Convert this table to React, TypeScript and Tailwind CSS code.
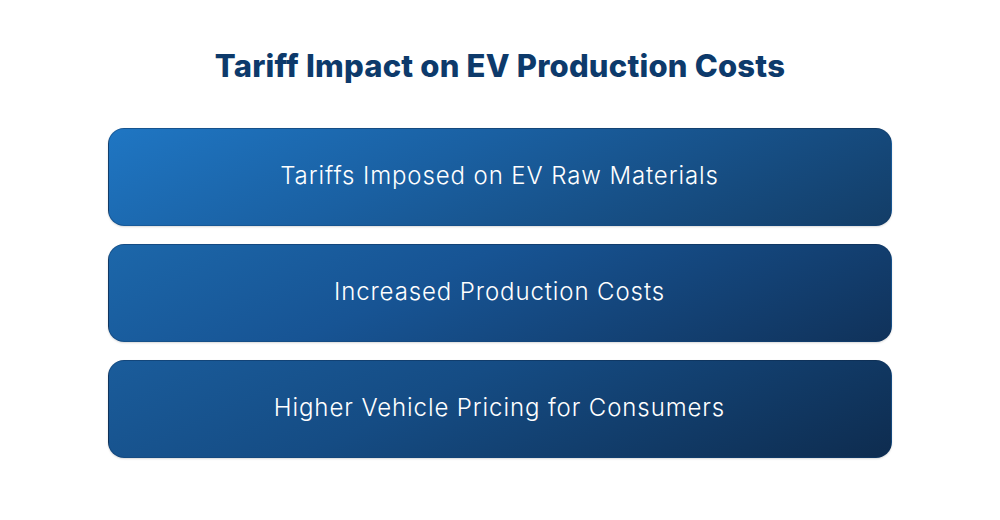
export default function App() {
  const items = [
    { text: "Tariffs Imposed on EV Raw Materials", cls: "bg-[linear-gradient(155deg,#1f76c3_0%,#1a60a2_40%,#133d67_100%)]" },
    { text: "Increased Production Costs", cls: "bg-[linear-gradient(155deg,#1c67aa_0%,#175494_40%,#10325a_100%)]" },
    { text: "Higher Vehicle Pricing for Consumers", cls: "bg-[linear-gradient(155deg,#1a5c9b_0%,#154c84_40%,#0e2c4f_100%)]" },
  ];
  return (
    <div className="w-[1000px] h-[520px] bg-white flex flex-col items-center font-['Inter',sans-serif]">
      <h1 className="mt-[46px] h-[40px] flex items-center text-[31px] font-extrabold text-[#0d3a6b] tracking-[0.2px]">
        Tariff Impact on EV Production Costs
      </h1>
      <div className="mt-[42px] flex flex-col gap-[18px] w-[784px] ml-[-1px]">
        {items.map((it) => (
          <div
            key={it.text}
            className={`h-[98px] rounded-[16px] flex items-center justify-center border border-[#0f355e]/40 shadow-[0_1px_2px_rgba(0,0,0,0.15)] ${it.cls}`}
          >
            <span className="text-white text-[24px] font-light tracking-[0.9px] -mt-[2px]">{it.text}</span>
          </div>
        ))}
      </div>
    </div>
  );
}
